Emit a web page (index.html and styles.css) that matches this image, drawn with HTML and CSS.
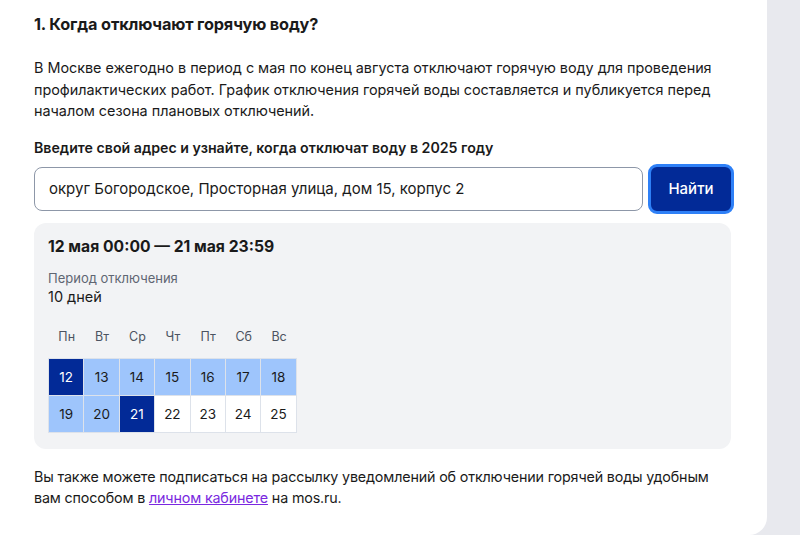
FILE: index.html
```html
<!DOCTYPE html>
<html lang="ru">
<head>
  <meta charset="UTF-8">
  <title>Отключение горячей воды</title>
  <link rel="stylesheet" href="styles.css">
</head>
<body>
  <div class="page">
    <div class="card">
      <h2>1. Когда отключают горячую воду?</h2>
      <p class="intro">В Москве ежегодно в период с мая по конец августа отключают горячую воду для проведения профилактических работ. График отключения горячей воды составляется и публикуется перед началом сезона плановых отключений.</p>

      <div class="label">Введите свой адрес и узнайте, когда отключат воду в 2025 году</div>
      <div class="search">
        <input class="address" type="text" value="округ Богородское, Просторная улица, дом 15, корпус 2">
        <button class="find-button">Найти</button>
      </div>

      <div class="result">
        <div class="dates">12 мая 00:00 — 21 мая 23:59</div>
        <div class="period-label">Период отключения</div>
        <div class="period-value">10 дней</div>

        <div class="weekdays">
          <span>Пн</span><span>Вт</span><span>Ср</span><span>Чт</span><span>Пт</span><span>Сб</span><span>Вс</span>
        </div>
        <div class="days">
          <div class="day edge">12</div>
          <div class="day off">13</div>
          <div class="day off">14</div>
          <div class="day off">15</div>
          <div class="day off">16</div>
          <div class="day off">17</div>
          <div class="day off">18</div>
          <div class="day off">19</div>
          <div class="day off">20</div>
          <div class="day edge">21</div>
          <div class="day">22</div>
          <div class="day">23</div>
          <div class="day">24</div>
          <div class="day">25</div>
        </div>
      </div>

      <p class="note">Вы также можете подписаться на рассылку уведомлений об отключении горячей воды удобным вам способом в <a href="#">личном кабинете</a> на mos.ru.</p>
    </div>
    <div class="side"></div>
  </div>
</body>
</html>
```

FILE: styles.css
```css
body {
  margin: 0;
  font-family: Inter, 'Noto Sans', sans-serif;
  color: #1a1a1a;
  background-color: #e8e9ee;
}

.page {
  display: flex;
  height: 535px;
  overflow: hidden;
}

.card {
  width: 767px;
  box-sizing: border-box;
  padding: 12px 36px 0 34px;
  background-color: #fff;
  border-bottom-right-radius: 18px;
  height: 535px;
}

.side {
  flex: 1;
}

h2 {
  margin: 0;
  font-size: 16.3px;
  font-weight: 700;
  line-height: 24px;
  letter-spacing: -0.15px;
}

.intro {
  margin: 21px 0 0;
  font-size: 14.4px;
  line-height: 21.5px;
  letter-spacing: -0.02px;
}

.label {
  margin-top: 16px;
  font-size: 14.2px;
  font-weight: 600;
  line-height: 20px;
}

.search {
  display: flex;
  align-items: center;
  gap: 5px;
  margin-top: 6px;
  width: 700px;
}

.address {
  width: 609px;
  height: 44px;
  box-sizing: border-box;
  padding: 0 14px;
  border: 1px solid #8d97a8;
  border-radius: 8px;
  font-family: inherit;
  font-size: 15px;
  color: #1a1a1a;
}

.find-button {
  width: 86px;
  height: 50px;
  border: 3px solid #2e80f7;
  border-radius: 9px;
  background-color: #022a97;
  color: #fff;
  font-family: inherit;
  font-size: 15px;
  font-weight: 500;
  cursor: pointer;
}

.result {
  margin-top: 9px;
  width: 697px;
  box-sizing: border-box;
  padding: 12px 14px 16px;
  background-color: #f2f3f5;
  border-radius: 12px;
}

.dates {
  font-size: 15.7px;
  font-weight: 700;
  line-height: 24px;
}

.period-label {
  margin-top: 10px;
  font-size: 13px;
  color: #5f6673;
  line-height: 18px;
}

.period-value {
  font-size: 14.5px;
  line-height: 20px;
}

.weekdays {
  display: grid;
  grid-template-columns: repeat(7, 35.4px);
  padding-left: 1px;
  margin-top: 21px;
  font-size: 12.5px;
  color: #4c5361;
  text-align: center;
  line-height: 18px;
}

.days {
  display: grid;
  grid-template-columns: repeat(7, 34.4px);
  grid-auto-rows: 36px;
  margin-top: 12px;
  width: 249px;
  background-color: #dde2ea;
  gap: 1px;
  border: 1px solid #dde2ea;
  box-sizing: border-box;
}

.day {
  display: flex;
  align-items: center;
  justify-content: center;
  background-color: #fff;
  font-size: 13.5px;
  color: #1a1a1a;
}

.day.off {
  background-color: #9ec5fc;
}

.day.edge {
  background-color: #022a97;
  color: #fff;
}

.note {
  margin: 17px 0 0;
  font-size: 14.3px;
  line-height: 21.5px;
  letter-spacing: -0.15px;
}

.note a {
  color: #7a28e0;
}
```
